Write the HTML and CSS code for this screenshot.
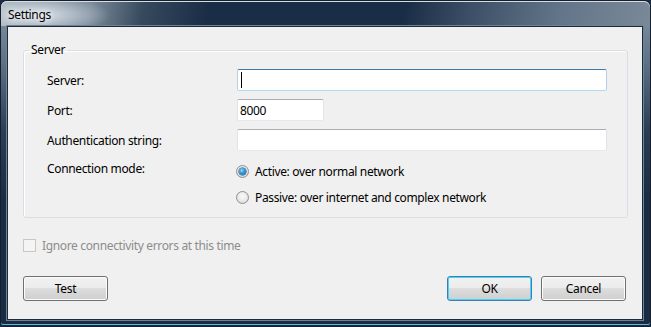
FILE: index.html
```html
<!DOCTYPE html>
<html>
<head>
<meta charset="utf-8">
<link rel="stylesheet" href="styles.css">
</head>
<body>
<div class="window">
  <div class="titlebar"><span class="title">Settings</span></div>
  <div class="client">
    <fieldset class="group">
      <legend class="legend">Server</legend>
      <div class="form">
        <div class="label">Server:</div>
        <div class="field"><div class="input wide focused"><span class="caret"></span></div></div>
        <div class="label">Port:</div>
        <div class="field"><div class="input narrow">8000</div></div>
        <div class="label">Authentication string:</div>
        <div class="field"><div class="input wide"></div></div>
        <div class="label top">Connection mode:</div>
        <div class="radios">
          <div class="radio-row"><span class="radio checked"><span class="dot"></span></span><span>Active: over normal network</span></div>
          <div class="radio-row"><span class="radio"></span><span>Passive: over internet and complex network</span></div>
        </div>
      </div>
    </fieldset>
    <div class="check-row">
      <span class="checkbox"></span>
      <span class="disabled-text">Ignore connectivity errors at this time</span>
    </div>
    <div class="buttons">
      <div class="btn">Test</div>
      <div class="right-buttons">
        <div class="btn default">OK</div>
        <div class="btn">Cancel</div>
      </div>
    </div>
  </div>
</div>
</body>
</html>
```

FILE: styles.css
```css
html, body {
  margin: 0;
  padding: 0;
  background: #1b2d44;
}
body {
  width: 651px;
  height: 327px;
  overflow: hidden;
  font-family: "Noto Sans", "Open Sans", sans-serif;
  font-size: 12px;
  letter-spacing: -0.35px;
  color: #000;
}
.window {
  width: 651px;
  height: 327px;
  box-sizing: border-box;
  border: 1px solid #14202e;
  border-radius: 7px 7px 3px 3px;
  background: linear-gradient(to bottom, #8796a4 0px, #5f7286 60px, #2a3d55 130px, #1a2c43 200px, #1a2c43 100%);
  display: flex;
  flex-direction: column;
  padding: 0 7px 6px 6px;
  box-shadow: inset 0 -1px 0 #1a2c43, inset 0 -2px 0 #5fb8dc, inset 0 1px 0 #c9d1d9;
}
.titlebar {
  height: 25px;
  margin: 0 -7px 0 -6px;
  padding-left: 7px;
  border-radius: 6px 6px 0 0;
  background:
    radial-gradient(ellipse 70px 18px at 40px 14px, rgba(225,232,238,0.85), rgba(225,232,238,0) 100%),
    linear-gradient(100deg, #a9b5bf 0%, #7a8a99 14%, #37495e 22%, #1a2d46 32%, #1a2d46 62%, #3c4f66 72%, #63758a 86%, #7a8998 100%);
  display: flex;
  align-items: center;
  box-shadow: inset 0 1px 0 #d6dde3;
}
.title {
  font-size: 12px;
  color: #000;
  text-shadow: 0 0 6px #fff, 0 0 10px #fff;
  padding-top: 2px;
}
.client {
  flex: 1;
  background: #f0f0f0;
  border: 1px solid #1c2b3c;
  box-shadow: 0 0 0 1px #6f8394;
  display: flex;
  flex-direction: column;
  padding: 0 15px 0 15px;
}
.group {
  margin: 15px 0 0 0;
  border: 1px solid #d5dfe5;
  border-radius: 3px;
  padding: 0 20px 11px 23px;
  box-shadow: inset 1px 1px 0 #fff;
}
.legend {
  margin-left: -18px;
  padding: 0 2px;
  line-height: 16px;
}
.form {
  display: grid;
  grid-template-columns: 190px 1fr;
  row-gap: 8px;
  margin-top: 11px;
}
.label {
  display: flex;
  align-items: center;
  height: 22px;
}
.label.top {
  height: 12px;
  margin-top: 3px;
}
.field {
  display: flex;
}
.input {
  box-sizing: border-box;
  height: 22px;
  background: #fff;
  border: 1px solid #e2e3ea;
  border-top-color: #abadb3;
  border-bottom-color: #e3e9ef;
  border-radius: 2px;
  display: flex;
  align-items: center;
  padding-left: 2px;
}
.input.wide { width: 370px; }
.input.narrow { width: 87px; }
.input.focused {
  border-color: #b5cfe7;
  border-top-color: #3d7bad;
  border-bottom-color: #b7d9ed;
}
.caret {
  width: 1px;
  height: 16px;
  background: #000;
  margin-left: 1px;
}
.radios {
  display: flex;
  flex-direction: column;
  gap: 8px;
  margin-top: 3px;
}
.radio-row {
  display: flex;
  align-items: center;
  height: 18px;
  gap: 6px;
}
.radio {
  box-sizing: border-box;
  width: 13px;
  height: 13px;
  border-radius: 50%;
  border: 1px solid #8f8f8f;
  background: radial-gradient(circle at 50% 40%, #fafafa 0%, #e8e8e8 55%, #c9c9c9 100%);
  display: flex;
  align-items: center;
  justify-content: center;
  margin-left: -1px;
}
.dot {
  width: 7px;
  height: 7px;
  border-radius: 50%;
  background: radial-gradient(circle at 40% 35%, #9fdcfb 0%, #3aa1e0 35%, #145b93 100%);
  box-shadow: 0 0 0 0.5px #1b4f7a;
}
.check-row {
  display: flex;
  align-items: center;
  height: 16px;
  margin-top: 19px;
  gap: 6px;
}
.checkbox {
  box-sizing: border-box;
  width: 13px;
  height: 13px;
  border: 1px solid #c7c7c7;
  background: #f4f4f4;
}
.disabled-text {
  color: #8d8d8d;
}
.buttons {
  display: flex;
  justify-content: space-between;
  margin-top: 23px;
  padding-right: 1px;
}
.right-buttons {
  display: flex;
  gap: 9px;
}
.btn {
  box-sizing: border-box;
  width: 85px;
  height: 25px;
  border: 1px solid #707070;
  border-radius: 3px;
  background: linear-gradient(to bottom, #f2f2f2 0%, #ebebeb 48%, #dddddd 50%, #cfcfcf 100%);
  box-shadow: inset 0 0 0 1px #fcfcfc;
  display: flex;
  align-items: center;
  justify-content: center;
}
.btn.default {
  border-color: #3c7fb1;
  box-shadow: inset 0 0 0 1px #48d4f7;
}
```
